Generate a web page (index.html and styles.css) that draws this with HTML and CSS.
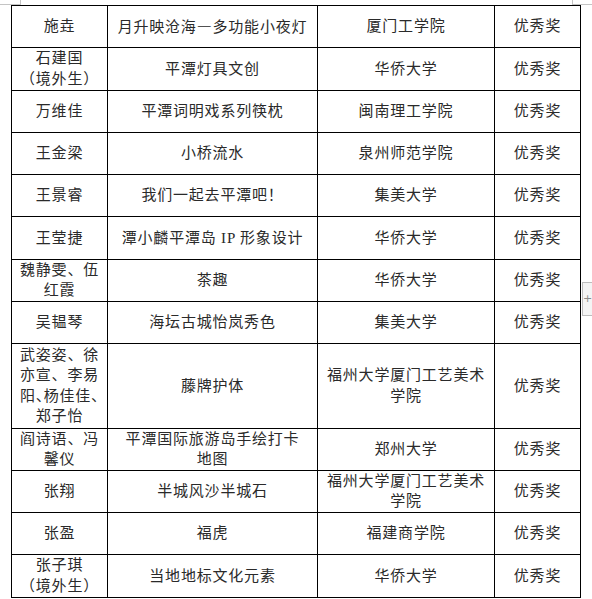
FILE: index.html
```html
<!DOCTYPE html>
<html lang="zh-CN">
<head>
<meta charset="utf-8">
<title>获奖名单</title>
<link rel="stylesheet" href="styles.css">
</head>
<body>
<div class="page">
  <div class="corner corner-tl"></div>
  <div class="corner corner-tr"></div>
  <table class="awards">
    <colgroup>
      <col class="c-name"><col class="c-work"><col class="c-school"><col class="c-prize">
    </colgroup>
    <tbody>
      <tr><td>施垚</td><td>月升映沧海<span class="cjk">—</span>多功能小夜灯</td><td>厦门工学院</td><td>优秀奖</td></tr>
      <tr><td>石建国<br>（境外生）</td><td>平潭灯具文创</td><td>华侨大学</td><td>优秀奖</td></tr>
      <tr><td>万维佳</td><td>平潭词明戏系列筷枕</td><td>闽南理工学院</td><td>优秀奖</td></tr>
      <tr><td>王金梁</td><td>小桥流水</td><td>泉州师范学院</td><td>优秀奖</td></tr>
      <tr><td>王景睿</td><td>我们一起去平潭吧！</td><td>集美大学</td><td>优秀奖</td></tr>
      <tr><td>王莹捷</td><td>潭小麟平潭岛 IP 形象设计</td><td>华侨大学</td><td>优秀奖</td></tr>
      <tr><td>魏静雯、伍<br>红霞</td><td>茶趣</td><td>华侨大学</td><td>优秀奖</td></tr>
      <tr><td>吴韫琴</td><td>海坛古城怡岚秀色</td><td>集美大学</td><td>优秀奖</td></tr>
      <tr class="tall"><td>武姿姿、徐<br>亦宣、李易<br>阳<span class="half">、</span>杨佳佳<span class="half">、</span><br>郑子怡</td><td>藤牌护体</td><td>福州大学厦门工艺美术<br>学院</td><td>优秀奖</td></tr>
      <tr><td>阎诗语、冯<br>馨仪</td><td>平潭国际旅游岛手绘打卡<br>地图</td><td>郑州大学</td><td>优秀奖</td></tr>
      <tr><td>张翔</td><td>半城风沙半城石</td><td>福州大学厦门工艺美术<br>学院</td><td>优秀奖</td></tr>
      <tr><td>张盈</td><td>福虎</td><td>福建商学院</td><td>优秀奖</td></tr>
      <tr><td>张子琪<br>（境外生）</td><td>当地地标文化元素</td><td>华侨大学</td><td>优秀奖</td></tr>
    </tbody>
  </table>
  <div class="add-btn">+</div>
</div>
</body>
</html>
```
FILE: styles.css
```css
html, body {
  margin: 0;
  padding: 0;
  background: #ffffff;
}

body {
  font-family: "Liberation Serif", "Noto Sans CJK SC", serif;
  font-size: 15px;
  color: #2a2a2a;
}

.page {
  position: relative;
  width: 592px;
  height: 599px;
  box-sizing: border-box;
  padding: 5px 0 0 11px;
  overflow: hidden;
}

.awards {
  border-collapse: collapse;
  table-layout: fixed;
  width: 569px;
}

.c-name { width: 96px; }
.c-work { width: 210px; }
.c-school { width: 177px; }
.c-prize { width: 86px; }

.awards td {
  border: 1px solid #000;
  text-align: center;
  vertical-align: middle;
  padding: 0 2px;
  height: 41.25px;
  line-height: 20.5px;
  letter-spacing: 0.8px;
  white-space: nowrap;
  overflow: visible;
}

.awards tr.tall td {
  height: 83.5px;
}

.cjk {
  font-family: "Noto Sans CJK SC", sans-serif;
}

.half {
  letter-spacing: -7px;
}

.corner {
  position: absolute;
  top: 0;
  width: 20px;
  height: 4px;
  border-bottom: 1px solid #c4c4c4;
}

.corner-tl {
  left: 0;
  border-right: 1px solid #c4c4c4;
}

.corner-tr {
  left: 572px;
  border-left: 1px solid #c4c4c4;
}

.add-btn {
  position: absolute;
  left: 582px;
  top: 282px;
  width: 10px;
  height: 34px;
  box-sizing: border-box;
  background: #f4f4f4;
  border: 1px solid #bdbdbd;
  border-right: none;
  color: #8a8a8a;
  font-family: "DejaVu Sans", sans-serif;
  font-size: 11px;
  line-height: 32px;
  text-align: left;
  padding-left: 0;
}
```
